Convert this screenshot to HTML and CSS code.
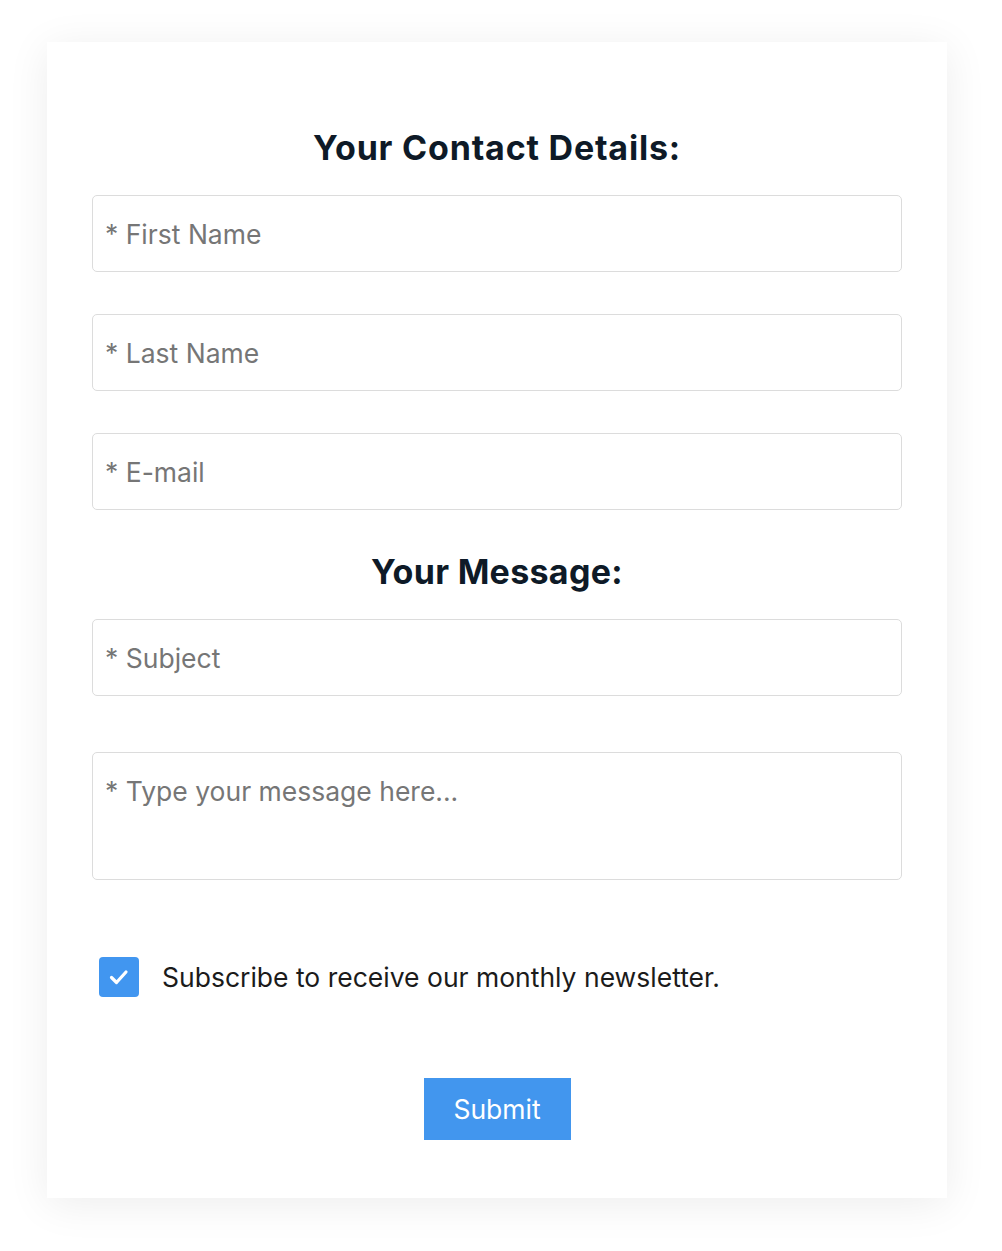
FILE: index.html
```html
<!DOCTYPE html>
<html lang="en">
<head>
<meta charset="utf-8">
<title>Contact Form</title>
<link rel="stylesheet" href="styles.css">
</head>
<body>
<form class="card">
  <h2 class="title">Your Contact Details:</h2>
  <input class="field" type="text" placeholder="* First Name">
  <input class="field gap" type="text" placeholder="* Last Name">
  <input class="field gap" type="email" placeholder="* E-mail">
  <h2 class="title title-2">Your Message:</h2>
  <input class="field" type="text" placeholder="* Subject">
  <textarea class="field area" placeholder="* Type your message here..."></textarea>
  <label class="check">
    <span class="box"><svg width="40" height="40" viewBox="0 0 40 40"><path d="M12.5 20.5l5 5 9.5-10.5" fill="none" stroke="#fff" stroke-width="3.2" stroke-linecap="round" stroke-linejoin="round"/></svg></span>
    <span class="check-text">Subscribe to receive our monthly newsletter.</span>
  </label>
  <div class="actions"><button type="button" class="submit">Submit</button></div>
</form>
</body>
</html>
```

FILE: styles.css
```css
* { box-sizing: border-box; }
html, body { margin: 0; padding: 0; background: #fff; }
body { font-family: Inter, "Noto Sans", sans-serif; padding: 42px 0 54px 47px; }
.card {
  width: 900px;
  background: #fff;
  padding: 86px 45px 58px;
  box-shadow: 0 6px 40px rgba(0, 0, 0, 0.075);
  display: flex;
  flex-direction: column;
}
.title {
  margin: 0 0 27px;
  text-align: center;
  font-family: Inter, sans-serif;
  font-weight: 700;
  font-size: 34px;
  line-height: 40px;
  letter-spacing: 0.8px;
  color: #0e1a27;
}
.title-2 { margin-top: 42px; letter-spacing: 0.3px; }
.field {
  display: block;
  width: 810px;
  height: 77px;
  border: 1px solid #dcdcdc;
  border-radius: 5px;
  padding: 0 12px;
  font-family: Inter, sans-serif;
  font-size: 26.5px;
  color: #333;
  background: #fff;
  outline: none;
}
.field::placeholder { color: #767676; opacity: 1; }
.gap { margin-top: 42px; }
.area {
  margin-top: 56px;
  height: 128px;
  padding-top: 19px;
  line-height: 39px;
  resize: none;
}
.check {
  margin-top: 77px;
  margin-left: 7px;
  display: flex;
  align-items: center;
  gap: 23px;
}
.box {
  width: 40px;
  height: 40px;
  border-radius: 4px;
  background: #4196f0;
  display: flex;
  align-items: center;
  justify-content: center;
}
.check-text {
  font-size: 26.5px;
  color: #1b1b1b;
}
.actions { margin-top: 81px; display: flex; justify-content: center; }
.submit {
  width: 147px;
  height: 62px;
  border: none;
  border-radius: 0;
  background: #4296ee;
  color: #fff;
  font-family: Inter, sans-serif;
  font-size: 26.5px;
  padding: 0;
}
```
